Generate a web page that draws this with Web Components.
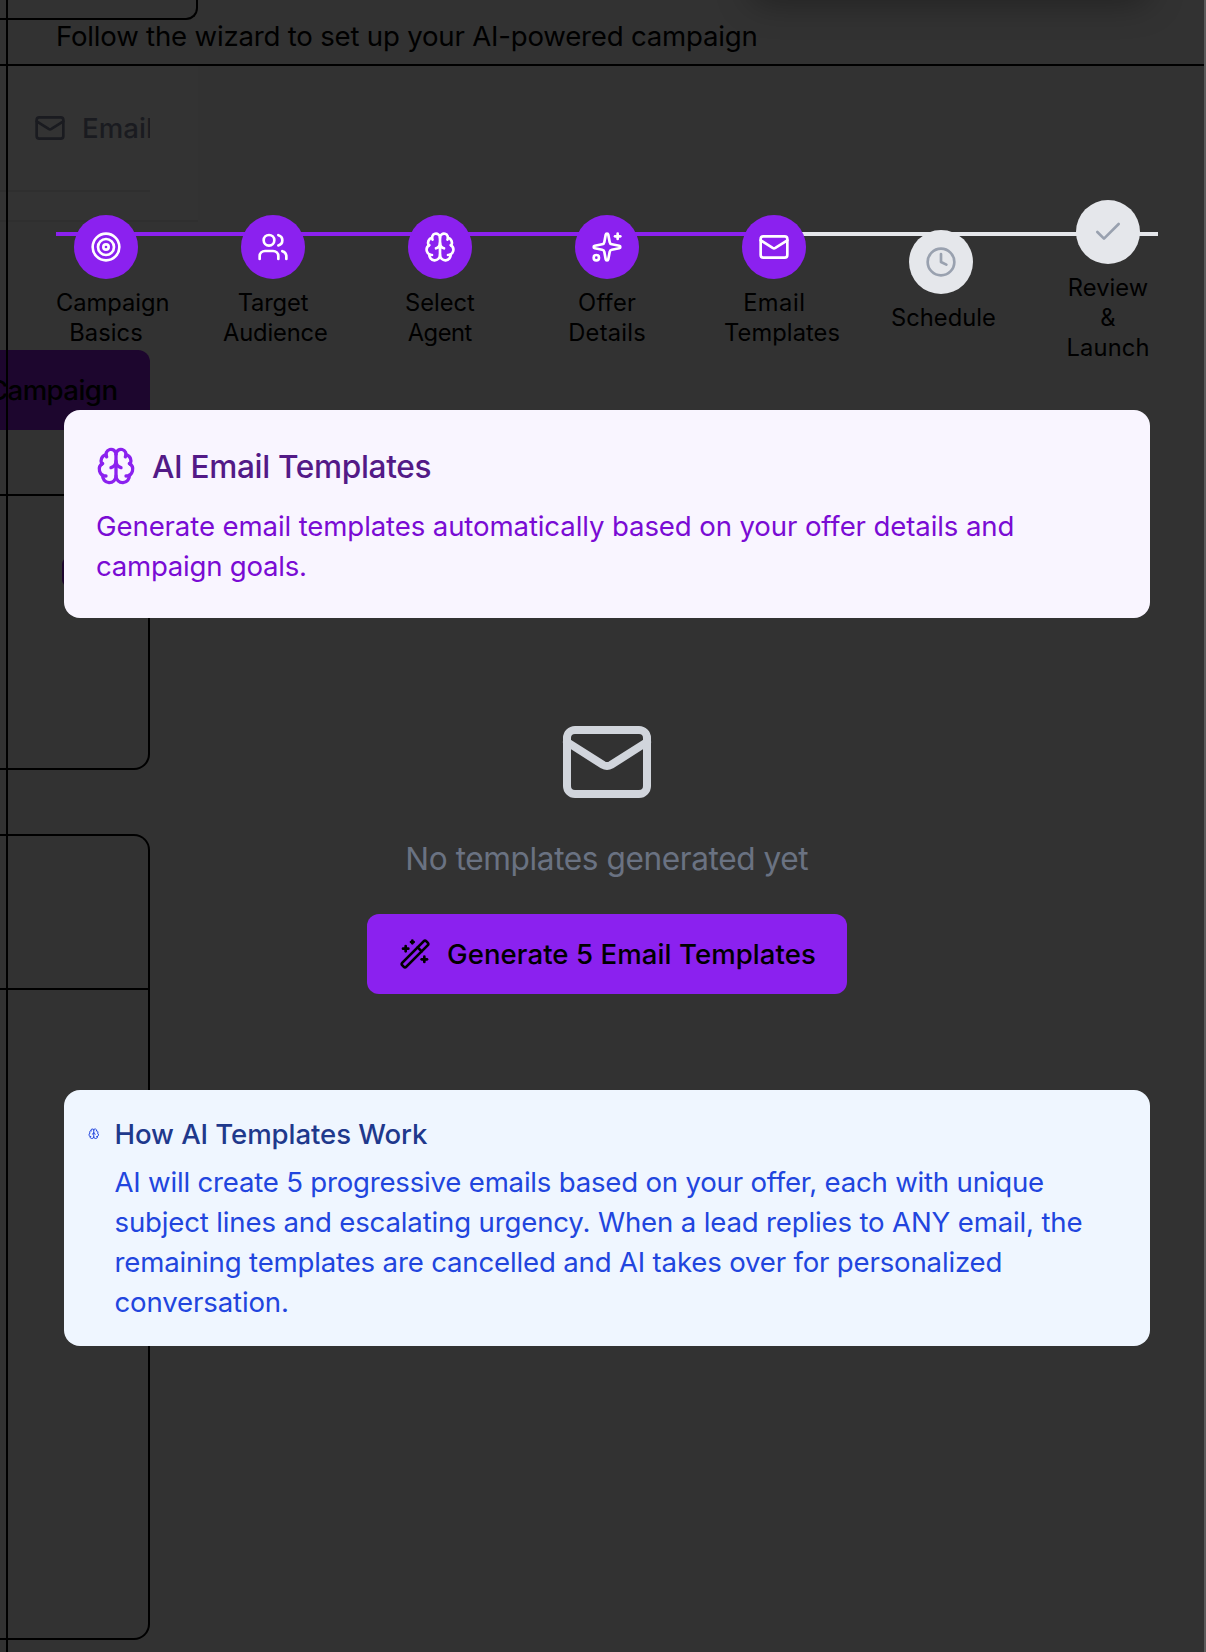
<!DOCTYPE html>
<html lang="en">
<head>
<meta charset="utf-8">
<title>Create campaign</title>
<style>
  body { margin: 0; background: #323232; font-family: Inter, "Liberation Sans", sans-serif; color: #000; }
</style>
</head>
<body>
<campaign-app></campaign-app>
<script>
const ICONS = {
  target: '<circle cx="12" cy="12" r="10"/><circle cx="12" cy="12" r="6"/><circle cx="12" cy="12" r="2"/>',
  users: '<path d="M16 21v-2a4 4 0 0 0-4-4H6a4 4 0 0 0-4 4v2"/><circle cx="9" cy="7" r="4"/><path d="M22 21v-2a4 4 0 0 0-3-3.87"/><path d="M16 3.128a4 4 0 0 1 0 7.744"/>',
  brain: '<path d="M12 18V5"/><path d="M15 13a4.17 4.17 0 0 1-3-4 4.17 4.17 0 0 1-3 4"/><path d="M17.598 6.5A3 3 0 1 0 12 5a3 3 0 1 0-5.598 1.5"/><path d="M17.997 5.125a4 4 0 0 1 2.526 5.77"/><path d="M18 18a4 4 0 0 0 2-7.464"/><path d="M19.967 17.483A4 4 0 1 1 12 18a4 4 0 1 1-7.967-.517"/><path d="M6 18a4 4 0 0 1-2-7.464"/><path d="M6.003 5.125a4 4 0 0 0-2.526 5.77"/>',
  sparkles: '<path d="M11.017 2.814a1 1 0 0 1 1.966 0l1.051 5.558a2 2 0 0 0 1.594 1.594l5.558 1.051a1 1 0 0 1 0 1.966l-5.558 1.051a2 2 0 0 0-1.594 1.594l-1.051 5.558a1 1 0 0 1-1.966 0l-1.051-5.558a2 2 0 0 0-1.594-1.594l-5.558-1.051a1 1 0 0 1 0-1.966l5.558-1.051a2 2 0 0 0 1.594-1.594z"/><path d="M20 2v4"/><path d="M22 4h-4"/><circle cx="4" cy="20" r="2"/>',
  mail: '<path d="m22 7-8.991 5.727a2 2 0 0 1-2.009 0L2 7"/><rect x="2" y="4" width="20" height="16" rx="2"/>',
  clock: '<circle cx="12" cy="12" r="10"/><path d="M12 6v6l4 2"/>',
  check: '<path d="M20 6 9 17l-5-5"/>',
  wand: '<path d="m21.64 3.64-1.28-1.28a1.21 1.21 0 0 0-1.72 0L2.36 18.64a1.21 1.21 0 0 0 0 1.72l1.28 1.28a1.2 1.2 0 0 0 1.72 0L21.64 5.36a1.2 1.2 0 0 0 0-1.72"/><path d="m14 7 3 3"/><path d="M5 6v4"/><path d="M19 14v4"/><path d="M10 2v2"/><path d="M7 8H3"/><path d="M21 16h-4"/><path d="M11 3H9"/>'
};

class Base extends HTMLElement {
  connectedCallback() {
    if (this.shadowRoot) return;
    this.attachShadow({ mode: 'open' }).innerHTML =
      `<style>:host{display:block;box-sizing:border-box}*{box-sizing:border-box}${this.css()}</style>${this.html()}`;
  }
  css() { return ''; }
  html() { return '<slot></slot>'; }
}

customElements.define('ui-icon', class extends Base {
  css() {
    const s = this.getAttribute('size') || 32;
    return `:host{width:${s}px;height:${s}px;flex:none}svg{display:block;width:100%;height:100%;fill:none;stroke:currentColor;stroke-width:2;stroke-linecap:round;stroke-linejoin:round}`;
  }
  html() { return `<svg viewBox="0 0 24 24">${ICONS[this.getAttribute('name')]}</svg>`; }
});

// One line of text, tracked so that its ink spans the given width.
const pen = document.createElement('canvas').getContext('2d');
customElements.define('text-line', class extends Base {
  css() {
    const size = +this.getAttribute('size'), weight = this.getAttribute('weight') || 420;
    const text = this.getAttribute('text'), w = +this.getAttribute('w');
    pen.font = `${weight} ${size}px Inter`;
    const m = pen.measureText(text);
    const ink = m.actualBoundingBoxLeft + m.actualBoundingBoxRight;
    const track = text.length > 1 && w ? (w - ink) / (text.length - 1) : 0;
    return `:host{white-space:nowrap;font-size:${size}px;font-weight:${weight};letter-spacing:${track.toFixed(3)}px}:host([low]){padding-top:1px;margin-bottom:-1px}span{margin-right:${(-track).toFixed(3)}px}`;
  }
  html() { return `<span>${this.getAttribute('text').replace('&', '&amp;')}</span>`; }
});

customElements.define('dimmed-page', class extends Base {
  css() { return `
    :host{display:flex;flex-direction:column;align-items:flex-start}
    .head{width:100%;height:66px;border-bottom:2px solid #000;flex:none}
    .stub{width:198px;height:20px;border:solid #000;border-width:0 2px 2px 0;border-radius:0 0 12px 0}
    .tabs{width:198px;height:156px;border-bottom:2px solid #2f2f2f;background:#333;flex:none}
    .row{width:150px;height:126px;padding-left:34px;display:flex;align-items:center;gap:16px;overflow:hidden;color:#1a1b20;border-bottom:2px solid #2f2f2f}
    .btn{width:150px;height:80px;flex:none;margin-top:128px;background:#1d062e;border-radius:0 12px 12px 0;display:flex;align-items:center;justify-content:flex-end;padding-right:32px;overflow:hidden}
    .panel{width:150px;border:2px solid #000;border-left:0;border-radius:0 16px 16px 0;flex:none;margin-top:64px}
    .one{height:276px;padding:62px 0 0 62px}
    .chip{width:40px;height:28px;border-radius:6px;background:#1d062e}
    .two{height:806px}
    .cap{height:154px;border-bottom:2px solid #000}`; }
  html() { return `
    <div class="head"><div class="stub"></div></div>
    <div class="tabs"><div class="row"><ui-icon name="mail"></ui-icon><text-line text="Email" size="27.6" weight="540" w="67"></text-line></div></div>
    <div class="btn"><text-line text="Campaign" size="27.6" weight="540" w="127.5"></text-line></div>
    <div class="panel one"><div class="chip"></div></div>
    <div class="panel two"><div class="cap"></div></div>`; }
});

customElements.define('wizard-step', class extends Base {
  css() { return `
    :host{width:100px;display:flex;flex-direction:column;align-items:center;gap:8px}
    .dot{width:64px;height:64px;border-radius:50%;display:flex;align-items:center;justify-content:center;background:#8b21ef;color:#fff}
    :host([pending]) .dot{background:#e5e7eb;color:#99a1af}
    .label{width:100px;display:grid;grid-template-columns:100px;justify-items:center;line-height:30px}
    .label text-line.wide{justify-self:start}`; }
  html() {
    const lines = this.getAttribute('lines').split('|').map(l => l.split(':'));
    return `<div class="dot"><ui-icon name="${this.getAttribute('icon')}"></ui-icon></div>
    <div class="label">${lines.map(([t, w]) => `<text-line low class="${w > 98 ? 'wide' : ''}" text="${t.replace('&', '&amp;')}" size="23.7" w="${w}"></text-line>`).join('')}</div>`;
  }
});

customElements.define('wizard-steps', class extends Base {
  css() { return `
    :host{display:grid;height:162px}
    .track,.items{grid-area:1/1}
    .track{height:4px;margin-top:32px;background:#e5e7eb}
    .fill{height:4px;width:735px;background:#8b21ef}
    .items{display:flex;justify-content:space-between;align-items:center;isolation:isolate}`; }
  html() { return `
    <div class="track"><div class="fill"></div></div>
    <div class="items">
      <wizard-step icon="target" lines="Campaign:111.5|Basics:71"></wizard-step>
      <wizard-step icon="users" lines="Target:70|Audience:104"></wizard-step>
      <wizard-step icon="brain" lines="Select:69|Agent:65"></wizard-step>
      <wizard-step icon="sparkles" lines="Offer:57|Details:75"></wizard-step>
      <wizard-step icon="mail" lines="Email:58|Templates:114.5"></wizard-step>
      <wizard-step icon="clock" pending lines="Schedule:103"></wizard-step>
      <wizard-step icon="check" pending lines="Review:78|&:15|Launch:80"></wizard-step>
    </div>`; }
});

customElements.define('intro-card', class extends Base {
  css() { return `
    :host{height:208px;padding:36px 32px 32px;border-radius:16px;background:#f9f5ff;color:#7a0bd4;line-height:40px}
    header{display:flex;align-items:center;gap:16px;margin-bottom:20px;color:#8b21ef}
    header text-line{color:#531a87}`; }
  html() { return `
    <header><ui-icon name="brain" size="40"></ui-icon><text-line low text="AI Email Templates" size="31.6" weight="540" w="278.5"></text-line></header>
    <slot></slot>`; }
});

customElements.define('empty-state', class extends Base {
  css() { return `
    :host{display:flex;flex-direction:column;align-items:center;color:#6a7282}
    .big{color:#d1d5dc}
    .msg{line-height:48px;margin:24px 0 31px}
    .btn{width:480px;height:80px;border-radius:12px;background:#8b21ef;color:#000;display:flex;align-items:center;padding-left:32px;gap:16px}`; }
  html() { return `
    <ui-icon class="big" name="mail" size="96"></ui-icon>
    <text-line low class="msg" text="No templates generated yet" size="31.6" w="401"></text-line>
    <div class="btn"><ui-icon name="wand"></ui-icon><text-line text="Generate 5 Email Templates" size="27.6" weight="540" w="367"></text-line></div>`; }
});

customElements.define('info-card', class extends Base {
  css() { return `
    :host{display:flex;gap:15px;height:256px;padding:24px;border-radius:16px;background:#eff6ff;color:#2145de;line-height:40px}
    ui-icon{margin-top:14px}
    .title{color:#1f398c;margin-bottom:8px}`; }
  html() { return `
    <ui-icon name="brain" size="11.5"></ui-icon>
    <div><text-line class="title" text="How AI Templates Work" size="27.6" weight="540" w="311.5"></text-line><slot></slot></div>`; }
});

customElements.define('wizard-dialog', class extends Base {
  css() { return `
    :host{margin-left:6px;border:solid #000;border-width:0 2px;border-right-color:#5a5a5a;padding:0 46px 0 48px;isolation:isolate}
    .sub{height:200px;padding-top:16px;line-height:40px}
    intro-card{margin:48px 8px 96px}
    info-card{margin:96px 8px 0}
    .drop{position:absolute;z-index:-1;left:750px;top:-40px;width:400px;height:34px;border-radius:16px;box-shadow:0 8px 34px rgba(0,0,0,.36)}`; }
  html() { return `
    <div class="drop"></div>
    <div class="sub"><text-line text="Follow the wizard to set up your AI-powered campaign" size="27.6" w="698.5"></text-line></div>
    <wizard-steps></wizard-steps>
    <intro-card>
      <text-line text="Generate email templates automatically based on your offer details and" size="27.6" w="915.5"></text-line>
      <text-line text="campaign goals." size="27.6" w="208"></text-line>
    </intro-card>
    <empty-state></empty-state>
    <info-card>
      <text-line text="AI will create 5 progressive emails based on your offer, each with unique" size="27.6" w="928.5"></text-line>
      <text-line text="subject lines and escalating urgency. When a lead replies to ANY email, the" size="27.6" w="966"></text-line>
      <text-line text="remaining templates are cancelled and AI takes over for personalized" size="27.6" w="884"></text-line>
      <text-line text="conversation." size="27.6" w="171.5"></text-line>
    </info-card>`; }
});

customElements.define('campaign-app', class extends Base {
  css() { return `
    :host{display:grid;width:1206px;height:1652px;overflow:hidden;position:relative;grid-template:1652px/1206px}
    dimmed-page,wizard-dialog{grid-area:1/1}`; }
  html() { return `<dimmed-page></dimmed-page><wizard-dialog></wizard-dialog>`; }
});
</script>
</body>
</html>
